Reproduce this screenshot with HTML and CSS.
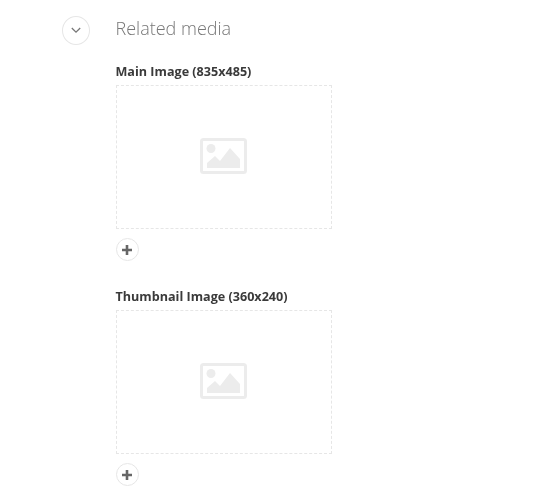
FILE: index.html
```html
<!DOCTYPE html>
<html lang="en">
<head>
  <meta charset="utf-8">
  <title>Related media</title>
  <link rel="stylesheet" href="styles.css">
</head>
<body>
  <div class="section">
    <button class="toggle-button">
      <svg width="10" height="7" viewBox="0 0 10 7"><path d="M.8 1 5 5.2 9.2 1" fill="none" stroke="#777" stroke-width="1.3"/></svg>
    </button>
    <div class="section-body">
      <h2>Related media</h2>

      <div class="media-field">
        <h3>Main Image (835x485)</h3>
        <div class="media-box">
          <svg width="47" height="36" viewBox="0 0 47 36"><use href="#placeholder"/></svg>
        </div>
        <button class="add-button">
          <svg width="10" height="10" viewBox="0 0 10 10"><path d="M3.7 0h2.6v3.7H10v2.6H6.3V10H3.7V6.3H0V3.7h3.7z" fill="#666"/></svg>
        </button>
      </div>

      <div class="media-field">
        <h3>Thumbnail Image (360x240)</h3>
        <div class="media-box">
          <svg width="47" height="36" viewBox="0 0 47 36"><use href="#placeholder"/></svg>
        </div>
        <button class="add-button">
          <svg width="10" height="10" viewBox="0 0 10 10"><path d="M3.7 0h2.6v3.7H10v2.6H6.3V10H3.7V6.3H0V3.7h3.7z" fill="#666"/></svg>
        </button>
      </div>
    </div>
  </div>

  <svg class="defs" width="0" height="0">
    <symbol id="placeholder" viewBox="0 0 47 36">
      <rect x="1.5" y="1.5" width="44" height="33" rx="2" fill="none" stroke="#ececec" stroke-width="3"/>
      <circle cx="11" cy="10.5" r="4.5" fill="#ececec"/>
      <path d="M7 30V25L15 18 20 23 30 10 40 21V30z" fill="#ececec"/>
    </symbol>
  </svg>
</body>
</html>
```

FILE: styles.css
```css
body {
  margin: 0;
  background: #fff;
  font-family: 'Open Sans', 'Liberation Sans', sans-serif;
  color: #333;
  will-change: opacity;
}

button {
  padding: 0;
  background: #fff;
  cursor: pointer;
  display: flex;
  justify-content: center;
  align-items: center;
}

.defs {
  position: absolute;
}

.section {
  display: flex;
  align-items: flex-start;
  padding: 16px 0 0 62px;
}

.toggle-button {
  width: 28px;
  height: 29px;
  border: 1px solid #e6e6e6;
  border-radius: 50%;
  flex-shrink: 0;
}

.section-body {
  margin-left: 25.5px;
}

h2 {
  margin: 0;
  font-size: 18px;
  font-weight: 300;
  line-height: 24px;
  color: #777;
}

.media-field {
  margin-bottom: 27px;
}

h3 {
  margin: 0;
  font-size: 12.6px;
  font-weight: 700;
  line-height: 18px;
  color: #3a3a3a;
}

.media-field:first-of-type h3 {
  margin-top: 23px;
}

.media-box {
  box-sizing: border-box;
  width: 216px;
  height: 144px;
  margin-top: 4px;
  padding-bottom: 2px;
  border: 1px dashed #e6e6e6;
  display: flex;
  justify-content: center;
  align-items: center;
}

.add-button {
  width: 23px;
  height: 23px;
  margin-top: 9px;
  border: 1px solid #e6e6e6;
  border-radius: 50%;
}
```
